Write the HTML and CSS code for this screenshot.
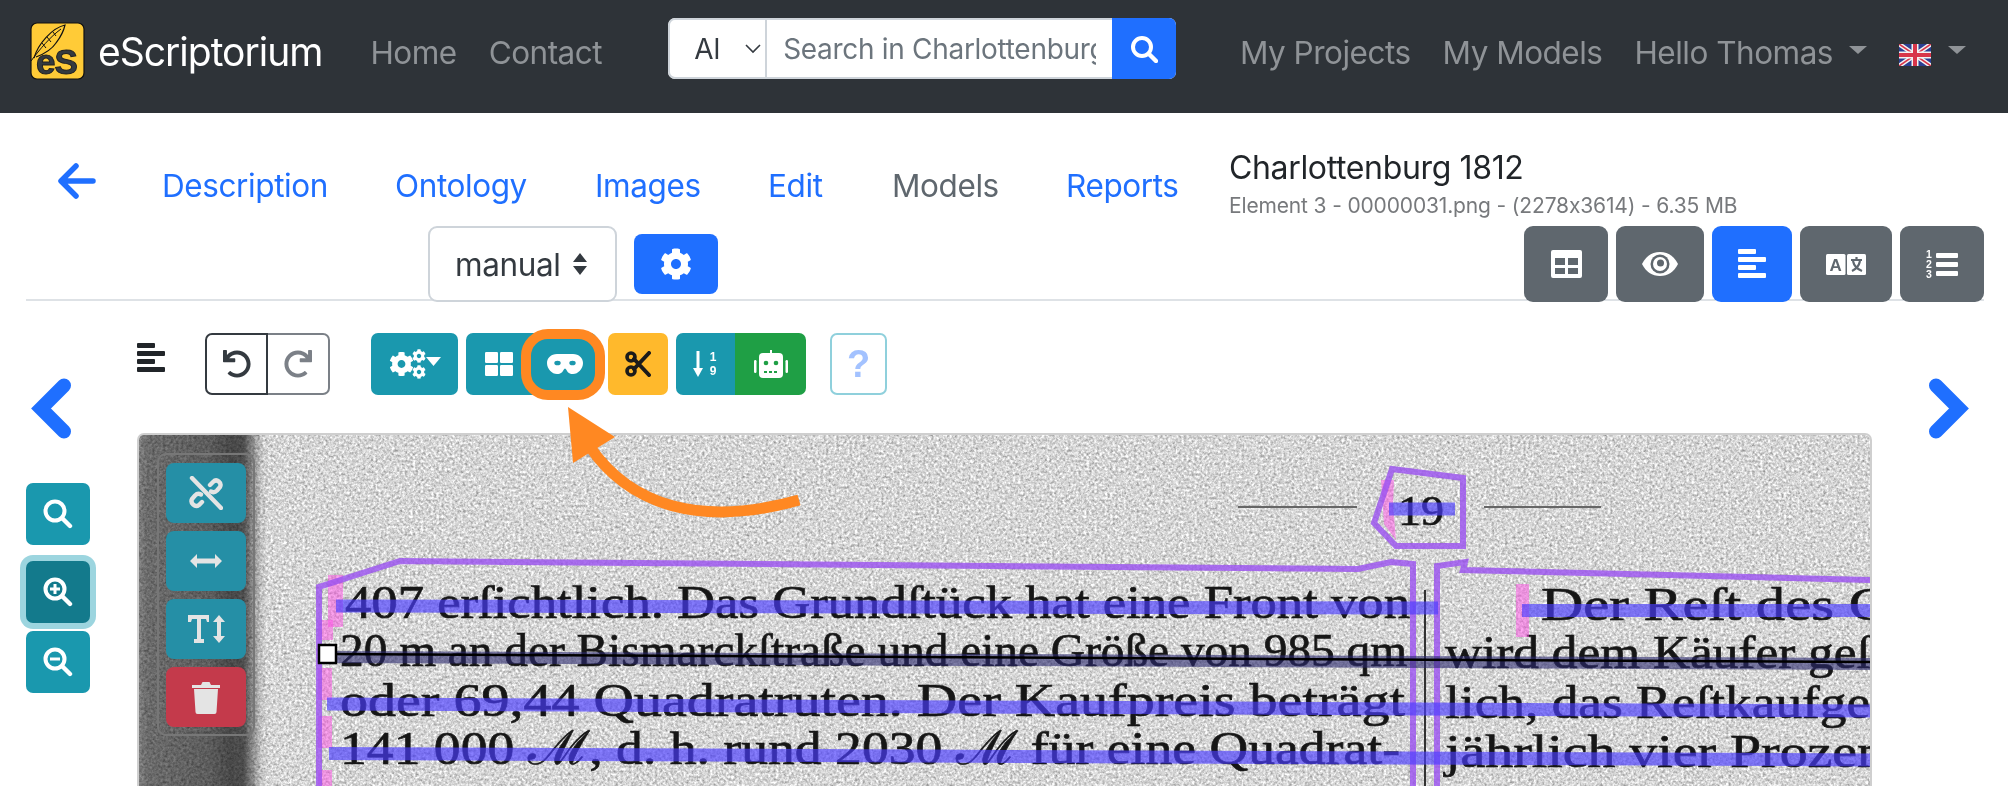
FILE: index.html
```html
<!DOCTYPE html>
<html lang="en">
<head>
<meta charset="utf-8">
<title>eScriptorium</title>
<link rel="stylesheet" href="styles.css">
</head>
<body>
<svg class="defs" width="0" height="0" aria-hidden="true">
  <defs>
    <symbol id="cog" viewBox="0 0 512 512"><path d="M487.4 315.7l-42.6-24.6c4.3-23.2 4.3-47 0-70.2l42.6-24.6c4.9-2.8 7.1-8.6 5.5-14-11.1-35.6-30-67.8-54.7-94.6-3.8-4.1-10-5.1-14.8-2.3L380.8 110c-17.9-15.4-38.5-27.3-60.8-35.1V25.8c0-5.6-3.9-10.5-9.4-11.7-36.7-8.2-74.3-7.8-109.2 0-5.5 1.2-9.4 6.1-9.4 11.7V75c-22.2 7.9-42.8 19.8-60.8 35.1L88.7 85.5c-4.9-2.8-11-1.9-14.8 2.3-24.7 26.7-43.6 58.9-54.7 94.6-1.7 5.4.6 11.2 5.5 14L67.3 221c-4.3 23.2-4.3 47 0 70.2l-42.6 24.6c-4.9 2.8-7.1 8.6-5.5 14 11.1 35.6 30 67.8 54.7 94.6 3.8 4.1 10 5.1 14.8 2.3l42.6-24.6c17.9 15.4 38.5 27.3 60.8 35.1v49.2c0 5.6 3.9 10.5 9.4 11.7 36.7 8.2 74.3 7.8 109.2 0 5.5-1.2 9.4-6.1 9.4-11.7v-49.2c22.2-7.9 42.8-19.8 60.8-35.1l42.6 24.6c4.9 2.8 11 1.9 14.8-2.3 24.7-26.7 43.6-58.9 54.7-94.6 1.5-5.5-.7-11.3-5.6-14.1zM256 336c-44.1 0-80-35.9-80-80s35.9-80 80-80 80 35.9 80 80-35.9 80-80 80z"/></symbol>
    <symbol id="undo" viewBox="0 0 512 512"><path d="M212.333 224.333H12c-6.627 0-12-5.373-12-12V12C0 5.373 5.373 0 12 0h48c6.627 0 12 5.373 12 12v78.112C117.773 39.279 184.26 7.47 258.175 8.007c136.906.994 246.448 111.623 246.157 248.532C504.041 393.258 393.12 504 256.333 504c-64.089 0-122.496-24.313-166.51-64.215-5.099-4.622-5.334-12.554-.467-17.42l33.967-33.967c4.474-4.474 11.662-4.717 16.401-.525C170.76 415.336 211.58 432 256.333 432c97.268 0 176-78.716 176-176 0-97.267-78.716-176-176-176-58.496 0-110.28 28.476-142.274 72.333h98.274c6.627 0 12 5.373 12 12v48c0 6.627-5.373 12-12 12z"/></symbol>
    <symbol id="bars" viewBox="0 0 28 30"><rect x="0" y="0" width="18" height="5" rx="1"/><rect x="0" y="8" width="28" height="5" rx="1"/><rect x="0" y="16" width="18" height="5" rx="1"/><rect x="0" y="24" width="28" height="5" rx="1"/></symbol>
  </defs>
</svg>

<header class="navbar">
  <a class="brand">
    <svg class="logo" viewBox="0 0 55 58">
      <rect x="1" y="1" width="53" height="56" rx="6" fill="#ffcb37" stroke="#111" stroke-width="1.2"/>
      <path d="M4 36C8 22 22 6 35 3c-2 9-6 14-9 18-4 6-12 11-20 14" fill="#ffcb37" stroke="#111" stroke-width="1.2"/>
      <path d="M1 39C10 27 20 15 31 7M12 21l4 5M17 15l4 5M23 10l3 4" fill="none" stroke="#111" stroke-width="1"/>
      <text x="6" y="52" class="logo-text">eS</text>
    </svg>
    <span class="brand-name">eScriptorium</span>
  </a>
  <nav class="nav-left">
    <a class="nav-link">Home</a>
    <a class="nav-link">Contact</a>
  </nav>
  <form class="search">
    <div class="search-scope">
      <span>Al</span>
      <svg class="chev" viewBox="0 0 16 10"><path d="M1 1l7 7 7-7" fill="none" stroke="#343a40" stroke-width="1.6"/></svg>
    </div>
    <input class="search-input" type="text" placeholder="Search in Charlottenburg 1812">
    <button class="search-go" type="button">
      <svg class="ic-28" viewBox="0 0 28 28"><circle cx="12" cy="12" r="9" fill="none" stroke="#fff" stroke-width="4"/><path d="M19 19l7 7" stroke="#fff" stroke-width="4.4" stroke-linecap="round"/></svg>
    </button>
  </form>
  <nav class="nav-right">
    <a class="nav-link">My Projects</a>
    <a class="nav-link">My Models</a>
    <a class="nav-link caret-link">Hello Thomas<i class="caret"></i></a>
    <a class="nav-link flag-link">
      <svg class="flag" viewBox="0 0 32 22">
        <rect width="32" height="22" fill="#2b3f92"/>
        <path d="M0 0l32 22M32 0L0 22" stroke="#f3f3f3" stroke-width="4.5"/>
        <path d="M0 0l32 22M32 0L0 22" stroke="#d8354a" stroke-width="1.6"/>
        <path d="M16 0v22M0 11h32" stroke="#f3f3f3" stroke-width="7"/>
        <path d="M16 0v22M0 11h32" stroke="#d8354a" stroke-width="4"/>
      </svg><i class="caret"></i>
    </a>
  </nav>
</header>

<section class="head">
  <div class="head-top">
    <a class="back">
      <svg class="ic-back" viewBox="0 0 38 36"><path d="M18 3L3 18l15 15M4 18h31" fill="none" stroke="#1f6fff" stroke-width="5.5" stroke-linecap="round" stroke-linejoin="round"/></svg>
    </a>
    <nav class="tabs">
      <a class="tab tab-1">Description</a>
      <a class="tab tab-2">Ontology</a>
      <a class="tab tab-3">Images</a>
      <a class="tab tab-4">Edit</a>
      <a class="tab tab-5 is-active">Models</a>
      <a class="tab tab-6">Reports</a>
    </nav>
    <div class="doc">
      <h1 class="doc-title">Charlottenburg 1812</h1>
      <p class="doc-sub">Element 3 - 00000031.png - (2278x3614) - 6.35 MB</p>
    </div>
  </div>
  <div class="head-bottom">
    <div class="mode-select"><span>manual</span>
      <svg class="updown" viewBox="0 0 16 22"><path d="M8 0l7 9H1zM8 22l-7-9h14z" fill="#343a40"/></svg>
    </div>
    <button class="gear-btn" type="button"><svg class="ic-32"><use href="#cog" fill="#fff"/></svg></button>
    <div class="views">
      <button class="view v-1" type="button">
        <svg class="ic-table" viewBox="0 0 31 28"><path fill-rule="evenodd" d="M2 0h27a2 2 0 0 1 2 2v24a2 2 0 0 1-2 2H2a2 2 0 0 1-2-2V2a2 2 0 0 1 2-2zM4 8v7h10V8zM17 8v7h10V8zM4 18v6h10v-6zM17 18v6h10v-6z" fill="#fff"/></svg>
      </button>
      <button class="view v-2" type="button">
        <svg class="ic-eye" viewBox="0 0 36 24">
          <path d="M0 12C4 4 10 0 18 0s14 4 18 12c-4 8-10 12-18 12S4 20 0 12z" fill="#fff"/>
          <circle cx="18" cy="12" r="9.500" fill="#5f676e"/>
          <circle cx="18" cy="12" r="7" fill="#fff"/>
          <circle cx="18.500" cy="11" r="3.500" fill="#5f676e"/>
        </svg>
      </button>
      <button class="view v-3 is-current" type="button"><svg class="ic-bars" fill="#fff"><use href="#bars"/></svg></button>
      <button class="view v-4" type="button">
        <svg class="ic-lang" viewBox="0 0 40 21">
          <rect x="0" y="0" width="19.500" height="21" rx="1.500" fill="#fff"/><rect x="21" y="0" width="19" height="21" rx="1.500" fill="#fff"/>
          <text x="9.700" y="17" class="lang-a">A</text>
          <path d="M25 6h11M30.500 3v3M27 7c1 5 4 8 9 10M34 7c-1 5-4 8-8 10" fill="none" stroke="#5f676e" stroke-width="2.200"/>
        </svg>
      </button>
      <button class="view v-5" type="button">
        <svg class="ic-ol" viewBox="0 0 32 28">
          <text x="0" y="8" class="ol-n">1</text><text x="0" y="18" class="ol-n">2</text><text x="0" y="28" class="ol-n">3</text>
          <rect x="10" y="3" width="22" height="5" rx="1" fill="#fff"/><rect x="10" y="12" width="22" height="5" rx="1" fill="#fff"/><rect x="10" y="21" width="22" height="5" rx="1" fill="#fff"/>
        </svg>
      </button>
    </div>
  </div>
</section>

<main class="editor">
  <aside class="rail rail-left">
    <a class="nav-arrow"><svg class="ic-chevron" viewBox="0 0 40 64"><path d="M33 8.500L10 31.500l23 23" fill="none" stroke="#1f6fff" stroke-width="14" stroke-linecap="round" stroke-linejoin="miter"/></svg></a>
    <div class="zooms">
      <button class="zoom-btn" type="button"><svg class="ic-30" viewBox="0 0 30 30"><circle cx="12" cy="12" r="9.500" fill="none" stroke="#fff" stroke-width="4"/><path d="M19.500 19.500l7.500 7.500" stroke="#fff" stroke-width="4.400" stroke-linecap="round"/></svg></button>
      <button class="zoom-btn is-focus" type="button"><svg class="ic-30" viewBox="0 0 30 30"><circle cx="12" cy="12" r="9.500" fill="none" stroke="#fff" stroke-width="4"/><path d="M19.500 19.500l7.500 7.500" stroke="#fff" stroke-width="4.400" stroke-linecap="round"/><path d="M12 7v10M7 12h10" stroke="#fff" stroke-width="3"/></svg></button>
      <button class="zoom-btn" type="button"><svg class="ic-30" viewBox="0 0 30 30"><circle cx="12" cy="12" r="9.500" fill="none" stroke="#fff" stroke-width="4"/><path d="M19.500 19.500l7.500 7.500" stroke="#fff" stroke-width="4.400" stroke-linecap="round"/><path d="M7 12h10" stroke="#fff" stroke-width="3"/></svg></button>
    </div>
  </aside>

  <div class="center">
    <div class="toolbar">
      <svg class="ic-lines" fill="#212529"><use href="#bars"/></svg>
      <div class="history">
        <button class="hist hist-undo" type="button"><svg class="ic-28"><use href="#undo" fill="#343a40"/></svg></button>
        <button class="hist hist-redo" type="button"><svg class="ic-28 flip"><use href="#undo" fill="#7b8087"/></svg></button>
      </div>
      <button class="tool tool-gears" type="button">
        <svg class="ic-gears" viewBox="0 0 52 30">
          <use href="#cog" x="0" y="2.500" width="25" height="25" fill="#fff"/>
          <use href="#cog" x="23" y="0" width="14" height="14" fill="#fff"/>
          <use href="#cog" x="23" y="16" width="14" height="14" fill="#fff"/>
          <path d="M37 8h15l-7.500 9z" fill="#fff"/>
        </svg>
      </button>
      <div class="tool-group">
        <button class="tool tool-grid" type="button">
          <svg class="ic-grid" viewBox="0 0 28 24"><rect x="0" y="0" width="13" height="11" rx="1.200" fill="#fff"/><rect x="15" y="0" width="13" height="11" rx="1.200" fill="#fff"/><rect x="0" y="13" width="13" height="11" rx="1.200" fill="#fff"/><rect x="15" y="13" width="13" height="11" rx="1.200" fill="#fff"/></svg>
        </button>
        <button class="tool tool-mask" type="button">
          <svg class="ic-mask" viewBox="0 0 36 20"><path d="M10 0h16c6 0 10 4 10 9 0 6-5 11-10 11-4 0-5.500-2-6.500-4-.5-1-1-1.500-1.500-1.500s-1 .5-1.500 1.500c-1 2-2.500 4-6.500 4C5 20 0 15 0 9c0-5 4-9 10-9z" fill="#fff"/><ellipse cx="10.500" cy="9" rx="3.200" ry="2.300" fill="#1a98ae"/><ellipse cx="25.500" cy="9" rx="3.200" ry="2.300" fill="#1a98ae"/></svg>
        </button>
      </div>
      <button class="tool tool-cut" type="button">
        <svg class="ic-cut" viewBox="0 0 26 26"><g fill="none" stroke="#1b1b1b" stroke-width="3.600"><circle cx="6" cy="6" r="4"/><circle cx="6" cy="20" r="4"/></g><path d="M9 8l15 16M9 18L24 2" stroke="#1b1b1b" stroke-width="4" stroke-linecap="round"/></svg>
      </button>
      <div class="tool-group">
        <button class="tool tool-sort" type="button">
          <svg class="ic-sort" viewBox="0 0 26 26"><path d="M5 0v20" stroke="#fff" stroke-width="3"/><path d="M0 17h10l-5 9z" fill="#fff"/><text x="20" y="10" class="sort-n">1</text><text x="20" y="24" class="sort-n">9</text></svg>
        </button>
        <button class="tool tool-robot" type="button">
          <svg class="ic-robot" viewBox="0 0 34 28"><rect x="16" y="0" width="2" height="4" fill="#fff"/><rect x="5" y="3" width="24" height="25" rx="4" fill="#fff"/><rect x="0" y="10" width="2.500" height="13" rx="1.200" fill="#fff"/><rect x="31.500" y="10" width="2.500" height="13" rx="1.200" fill="#fff"/><circle cx="12" cy="13" r="2.300" fill="#1f9f45"/><circle cx="22" cy="13" r="2.300" fill="#1f9f45"/><path d="M10 22h14" stroke="#1f9f45" stroke-width="2" stroke-dasharray="3 2"/></svg>
        </button>
      </div>
      <button class="tool tool-help" type="button">?</button>
    </div>

    <div class="stage">
      <svg class="scan" viewBox="137 433 1735 353" preserveAspectRatio="xMinYMin slice">
        <defs>
          <filter id="paper" x="0" y="0" width="100%" height="100%" color-interpolation-filters="sRGB">
            <feTurbulence type="fractalNoise" baseFrequency="0.38" numOctaves="3" seed="7"/>
            <feColorMatrix type="matrix" values="0.55 0.3 0 0 0.41  0.55 0.3 0 0 0.41  0.55 0.3 0 0 0.41  0 0 0 0 1"/>
            <feGaussianBlur stdDeviation="0.45"/>
          </filter>
          <filter id="ink"><feGaussianBlur stdDeviation="0.6"/></filter>
          <linearGradient id="gutter" x1="0" x2="1" y1="0" y2="0">
            <stop offset="0" stop-color="#9a9a9a"/>
            <stop offset="0.08" stop-color="#808080"/>
            <stop offset="0.55" stop-color="#6e6e6e"/>
            <stop offset="0.72" stop-color="#565656"/>
            <stop offset="0.82" stop-color="#5c5c5c"/>
            <stop offset="0.95" stop-color="#e4e4e4"/>
            <stop offset="1" stop-color="#fff"/>
          </linearGradient>
        </defs>
        <rect x="137" y="433" width="1735" height="353" filter="url(#paper)"/>
        <rect class="gutter" x="137" y="433" width="130" height="353" fill="url(#gutter)"/>
        <g class="ink" filter="url(#ink)">
          <path d="M1238 507h119M1484 507h117" stroke="#666" stroke-width="2"/>
          <path d="M1425 590V786" stroke="#333" stroke-width="2"/>
          <text x="1398" y="525" class="fr fr-num" textLength="46" lengthAdjust="spacingAndGlyphs">19</text>
          <text x="345" y="618" class="fr" textLength="1065" lengthAdjust="spacingAndGlyphs">407 erſichtlich.  Das  Grundſtück hat eine Front von</text>
          <text x="340" y="666" class="fr" textLength="1067" lengthAdjust="spacingAndGlyphs">20 m an der Bismarckſtraße und eine Größe von 985 qm</text>
          <text x="340" y="716" class="fr" textLength="1065" lengthAdjust="spacingAndGlyphs">oder 69,44  Quadratruten.  Der Kaufpreis beträgt</text>
          <text x="340" y="764" class="fr" textLength="1060" lengthAdjust="spacingAndGlyphs">141 000 ℳ, d. h. rund 2030 ℳ für eine Quadrat-</text>
          <text x="340" y="820" class="fr" textLength="1060" lengthAdjust="spacingAndGlyphs">rute. Der Verkäufer hat das Grundstück zu Bauzwecken</text>
          <text x="1541" y="620" class="fr" textLength="350" lengthAdjust="spacingAndGlyphs">Der  Reſt  des  G</text>
          <text x="1445" y="668" class="fr" textLength="440" lengthAdjust="spacingAndGlyphs">wird dem Käufer geſt</text>
          <text x="1445" y="718" class="fr" textLength="440" lengthAdjust="spacingAndGlyphs">lich, das Reſtkaufgel</text>
          <text x="1445" y="767" class="fr" textLength="440" lengthAdjust="spacingAndGlyphs">jährlich vier Prozen</text>
          <text x="1445" y="822" class="fr" textLength="440" lengthAdjust="spacingAndGlyphs">Bedingungen des Kauf</text>
        </g>
        <g class="masks">
          <path d="M1381 480h13l-1 24 3 36-12-16z"/>
          <rect x="1516" y="584" width="13" height="53"/>
          <rect x="328" y="575" width="15" height="52"/>
          <rect x="318" y="620" width="15" height="20"/>
          <rect x="318" y="668" width="14" height="32"/>
          <rect x="318" y="716" width="14" height="32"/>
          <rect x="318" y="770" width="14" height="16"/>
        </g>
        <g class="regions">
          <path d="M1392 469l71 9v68h-67l-22-23z"/>
          <path d="M319 786V587l81-26 958 8 33-7 22 2v222"/>
          <path d="M1437 786V566l28-4-2 8 409 10"/>
        </g>
        <g class="baselines">
          <path d="M1389 509h66"/>
          <path d="M336 606l1102 2"/>
          <path d="M1522 610.500h350"/>
          <path d="M327 704l1545 7"/>
          <path d="M329 753.500l1543 6.500"/>
        </g>
        <path class="baseline-sel" d="M327 657l1545 7"/>
        <path class="line-sel" d="M327 654l1545 8"/>
        <rect class="handle" x="319" y="645" width="17" height="18"/>
      </svg>
      <div class="float-panel">
        <button class="pbtn" type="button">
          <svg class="ic-34" viewBox="0 0 34 34" fill="none" stroke="#e4e4e4" stroke-width="4.400" stroke-linecap="round"><path d="M3 2l29 30"/><path d="M21 9l3-3c4-4 9 1 7 5l-3 3.500c-2 2-4 2-6 1"/><path d="M13 26l-3 3c-4 3-9-2-7-6l3-3.500c2-2 4-2 6-1"/></svg>
        </button>
        <button class="pbtn" type="button">
          <svg class="ic-arrows" viewBox="0 0 32 14"><path d="M0 7l7-7v4.500h18V0l7 7-7 7V9.500H7V14z" fill="#e4e4e4"/></svg>
        </button>
        <button class="pbtn" type="button">
          <svg class="ic-theight" viewBox="0 0 37 28"><path d="M0 0h21v7h-2l-1-3h-5v20h3v4H6v-4h3V4H4L3 7H0z" fill="#e4e4e4"/><path d="M31 0l6 7h-4v14h4l-6 7-6-7h4V7h-4z" fill="#e4e4e4"/></svg>
        </button>
        <button class="pbtn pbtn-red" type="button">
          <svg class="ic-trash" viewBox="0 0 28 33"><path d="M0 4h9l1.500-3h7L19 4h9v3H0z" fill="#e4e4e4"/><path d="M2 8h24l-1.500 23a2 2 0 0 1-2 2h-17a2 2 0 0 1-2-2z" fill="#e4e4e4"/></svg>
        </button>
      </div>
    </div>
  </div>

  <aside class="rail rail-right">
    <a class="nav-arrow"><svg class="ic-chevron" viewBox="0 0 40 64"><path d="M7 8.500l23 23-23 23" fill="none" stroke="#1f6fff" stroke-width="14" stroke-linecap="round" stroke-linejoin="miter"/></svg></a>
  </aside>
</main>

<svg class="annotation" viewBox="0 0 2008 786" aria-hidden="true">
  <rect x="526" y="334" width="74" height="61" rx="22" fill="none" stroke="#ff8822" stroke-width="10"/>
  <path d="M799 500C700 528 630 505 590 447" fill="none" stroke="#ff8822" stroke-width="11"/>
  <path d="M568 407l47 30-42 26z" fill="#ff8822"/>
</svg>
</body>
</html>
```
FILE: styles.css
```css
* { box-sizing: border-box; }
html, body { margin: 0; height: 786px; overflow: hidden; background: #fff; }
body { position: relative; font-family: Inter, "Liberation Sans", sans-serif; color: #212529; }
a { text-decoration: none; }
button { border: 0; padding: 0; font: inherit; display: flex; align-items: center; justify-content: center; }
svg { display: block; }
.defs { position: absolute; }

/* navbar */
.navbar { height: 113px; background: #2e3338; display: flex; align-items: flex-start; padding-left: 30px; }
.brand { display: flex; align-items: center; margin-top: 22px; height: 58px; }
.logo { width: 55px; height: 58px; }
.logo-text { font: bold 35px "Liberation Sans", sans-serif; fill: #343a40; stroke: #222; stroke-width: 1; letter-spacing: -1px; }
.brand-name { margin-left: 13px; font-size: 39px; color: #fff; letter-spacing: -1px; line-height: 1; }
.nav-link { color: #8f9397; font-size: 31.500px; letter-spacing: -.5px; line-height: 36px; white-space: nowrap; }
.nav-left { display: flex; gap: 32px; margin: 35px 0 0 48px; }
.nav-right { display: flex; gap: 32px; margin: 35px 42px 0 auto; }
.caret { display: inline-block; border: 9px solid transparent; border-top: 8.500px solid #8f9397; border-bottom: 0; }
.caret-link { display: flex; align-items: center; }
.caret-link .caret { margin: -6px 0 0 16px; }
.flag-link { display: flex; align-items: center; }
.flag { width: 32px; height: 22px; margin-top: 4px; }
.flag-link .caret { margin: -6px 0 0 17px; }

.search { margin: 18px 0 0 66px; width: 508px; height: 61px; display: flex; border-radius: 7px; overflow: hidden; background: #fff; }
.search-scope { width: 99px; border: 2px solid #ced4da; border-radius: 7px 0 0 7px; display: flex; align-items: center; padding-left: 24px; font-size: 28px; color: #343a40; }
.chev { width: 16px; height: 10px; margin-left: 25px; }
.search-input { width: 345px; border: 2px solid #ced4da; border-width: 2px 0; padding: 0 16px 0 16px; font: 28px Inter, sans-serif; letter-spacing: -.3px; outline: 0; color: #6c757d; }
.search-input::placeholder { color: #6c757d; opacity: 1; }
.search-go { width: 64px; background: #1f6fff; }
.ic-28 { width: 28px; height: 28px; }
.flip { transform: scaleX(-1); }

/* document head */
.head { height: 188px; margin: 0 24px 0 26px; border-bottom: 2px solid #dee2e6; display: flex; flex-direction: column; }
.head-top { height: 113px; flex: none; display: flex; align-items: flex-start; }
.back { margin: 50px 0 0 32px; }
.ic-back { width: 38px; height: 36px; }
.tabs { display: flex; margin: 53px 0 0 66px; }
.tab { color: #1f6fff; font-size: 31.500px; letter-spacing: -.4px; line-height: 40px; }
.tab.is-active { color: #5f676e; }
.tab-1 { width: 233px; }
.tab-2 { width: 200px; }
.tab-3 { width: 173px; }
.tab-4 { width: 124px; }
.tab-5 { width: 174px; }
.tab-6 { width: 163px; }
.doc { flex: none; }
.doc-title { margin: 36px 0 0; font-size: 32px; font-weight: 400; letter-spacing: -.35px; line-height: 38px; white-space: nowrap; }
.doc-sub { margin: 7px 0 0; font-size: 21px; color: #77797c; letter-spacing: -.15px; line-height: 24px; white-space: nowrap; }
.head-bottom { height: 76px; flex: none; display: flex; align-items: flex-start; }
.mode-select { width: 189px; height: 76px; margin-left: 402px; border: 2px solid #ced4da; border-radius: 9px; background: #fff; display: flex; align-items: center; padding-left: 25px; font-size: 31.500px; color: #343a40; letter-spacing: -.4px; }
.updown { width: 16px; height: 22px; margin-left: 12px; }
.gear-btn { width: 84px; height: 60px; margin: 8px 0 0 17px; background: #1f6fff; border-radius: 8px; }
.ic-32 { width: 32px; height: 32px; }
.ic-34 { width: 34px; height: 34px; }
.ic-30 { width: 30px; height: 30px; }
.views { display: flex; gap: 8px; margin-left: auto; }
.view { height: 76px; background: #5f676e; border-radius: 9px; }
.is-current { background: #1f6fff; }
.v-1 { width: 84px; } .v-2 { width: 88px; } .v-3 { width: 80px; } .v-4 { width: 92px; } .v-5 { width: 84px; }
.ic-table { width: 31px; height: 28px; }
.ic-eye { width: 36px; height: 24px; }
.ic-bars { width: 28px; height: 30px; }
.ic-lang { width: 40px; height: 21px; }
.lang-a { font: bold 17px "Liberation Sans", sans-serif; fill: #5f676e; text-anchor: middle; }
.ic-ol { width: 32px; height: 28px; }
.ol-n { font: bold 10.500px "Liberation Sans", sans-serif; fill: #fff; }

/* editor */
.editor { display: flex; align-items: flex-start; height: 485px; }
.rail { flex: none; }
.rail-left { width: 137px; padding: 76px 0 0 26px; }
.nav-arrow { display: block; }
.rail-left .nav-arrow { margin-left: 5px; }
.ic-chevron { width: 40px; height: 64px; }
.zooms { display: flex; flex-direction: column; gap: 8px; margin-top: 42px; }
.zoom-btn { width: 64px; height: 62px; background: #1a98ae; border-radius: 7px; }
.is-focus { margin-top: 8px; background: #137a8c; box-shadow: 0 0 0 6px #9cd5df; }
.center { flex: none; width: 1735px; }
.toolbar { height: 132px; padding-top: 32px; display: flex; align-items: flex-start; }
.ic-lines { width: 28px; height: 30px; margin-top: 10px; }
.history { display: flex; width: 125px; height: 62px; margin-left: 40px; }
.hist { background: #fff; border: 2px solid #7b8087; }
.hist-undo { width: 63px; border-color: #343a40; border-radius: 7px 0 0 7px; }
.hist-redo { width: 62px; border-left: 0; border-radius: 0 7px 7px 0; }
.tool { height: 62px; background: #1a98ae; border-radius: 7px; }
.tool-gears { width: 87px; margin-left: 41px; }
.ic-gears { width: 52px; height: 30px; }
.tool-group { display: flex; margin-left: 8px; }
.tool-group .tool:first-child { border-radius: 7px 0 0 7px; }
.tool-group .tool:last-child { border-radius: 0 7px 7px 0; }
.tool-grid { width: 66px; }
.ic-grid { width: 28px; height: 24px; }
.tool-mask { width: 65px; }
.ic-mask { width: 36px; height: 20px; }
.tool-cut { width: 60px; margin-left: 11px; background: #ffb92c; }
.ic-cut { width: 26px; height: 26px; }
.tool-sort { width: 59px; }
.ic-sort { width: 26px; height: 26px; }
.sort-n { font: bold 12px "Liberation Sans", sans-serif; fill: #fff; text-anchor: middle; }
.tool-robot { width: 71px; background: #1f9f45; }
.ic-robot { width: 34px; height: 28px; }
.tool-help { width: 57px; margin-left: 24px; background: #fff; border: 2px solid #8fd0dc; color: #a3c2ff; font: bold 38px "Liberation Sans", sans-serif; }

.stage { position: relative; height: 353px; border: 2px solid #cfcfcf; border-bottom: 0; border-radius: 7px 7px 0 0; overflow: hidden; }
.scan { position: absolute; left: -2px; top: -2px; width: 1735px; height: 353px; }
.gutter { mix-blend-mode: multiply; }
.fr { font: 400 47px "Liberation Serif", serif; fill: #161616; stroke: #161616; stroke-width: .7px; }
.fr-num { font-size: 42px; }
.masks { fill: #ff4fe6; fill-opacity: .5; }
.regions { fill: none; stroke: #9a50f0; stroke-opacity: .8; stroke-width: 6px; }
.baselines { fill: none; stroke: #4a3cff; stroke-opacity: .66; stroke-width: 13px; }
.baseline-sel { fill: none; stroke: #2b2a70; stroke-opacity: .6; stroke-width: 12px; }
.line-sel { fill: none; stroke: #000; stroke-width: 2.500px; }
.handle { fill: #fff; stroke: #000; stroke-width: 2.500px; }

.float-panel { position: absolute; left: 18px; top: 18px; width: 98px; height: 283px; border: 2px solid #777; border-radius: 9px; padding: 8px 7px; display: flex; flex-direction: column; gap: 8px; }
.pbtn { width: 80px; height: 60px; flex: none; background: #258fa6; border-radius: 8px; }
.pbtn-red { background: #c43a4b; }
.ic-arrows { width: 32px; height: 14px; }
.ic-theight { width: 37px; height: 28px; }
.ic-trash { width: 28px; height: 33px; }
.rail-right { padding: 76px 0 0 57px; }

.annotation { position: absolute; left: 0; top: 0; width: 2008px; height: 786px; pointer-events: none; }
```
